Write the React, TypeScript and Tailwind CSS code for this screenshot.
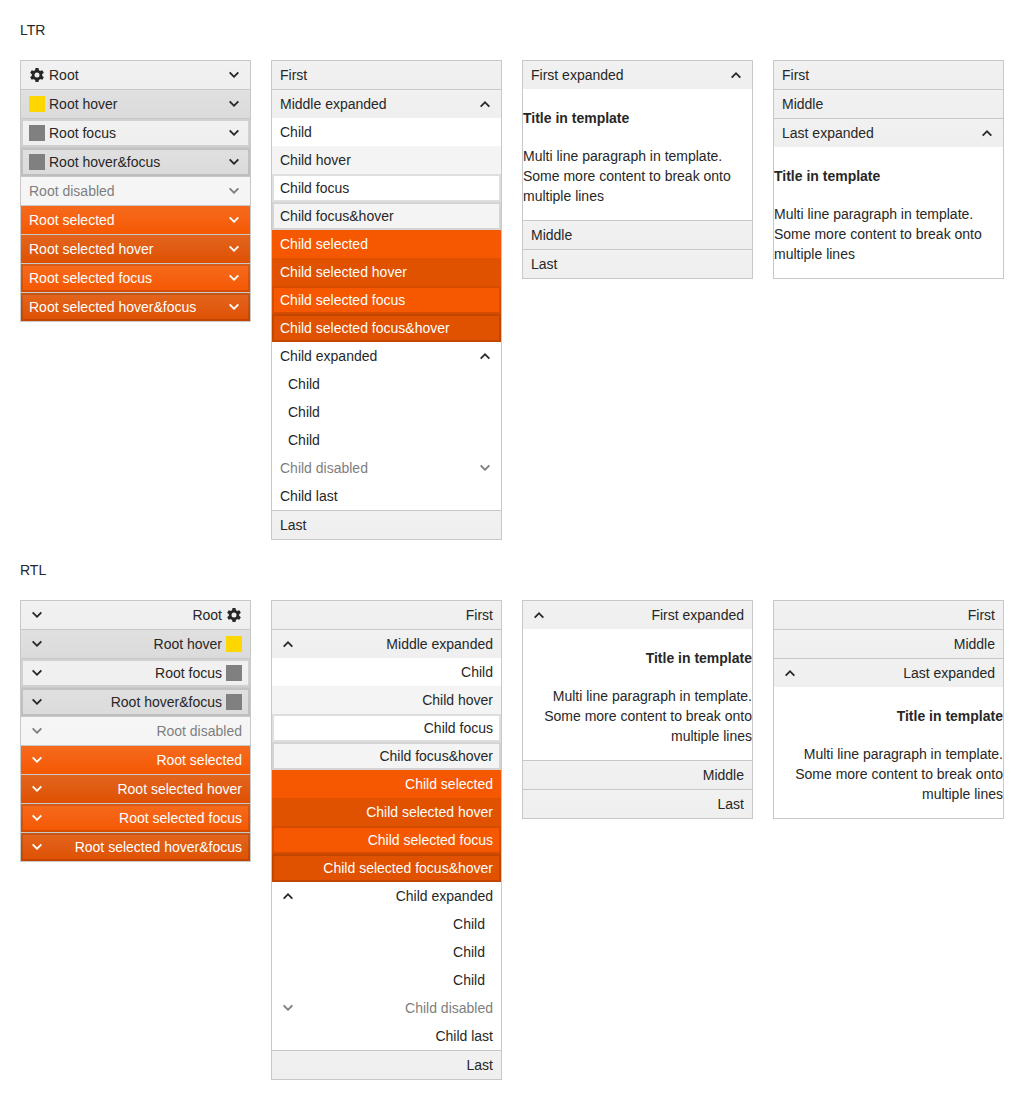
import type { ReactNode } from "react";

type Row = {
  label: string;
  look: string;
  icon?: "gear" | "gold" | "gray";
  arrow?: "up" | "down";
  indent?: boolean;
};

const line = "border-t border-[#c8c8c8]";
const root = "bg-linear-to-b from-[#f1f1f1] to-[#efefef]";
const ring = "shadow-[inset_0_0_0_2px_rgba(0,0,0,0.13)]";

const rootRows: Row[] = [
  { label: "Root", look: root, icon: "gear", arrow: "down" },
  { label: "Root hover", look: "bg-linear-to-b from-[#e0e0e0] to-[#dbdbdb]", icon: "gold", arrow: "down" },
  { label: "Root focus", look: `${root} ${ring}`, icon: "gray", arrow: "down" },
  { label: "Root hover&focus", look: `bg-linear-to-b from-[#e0e0e0] to-[#dbdbdb] ${ring}`, icon: "gray", arrow: "down" },
  { label: "Root disabled", look: `${root} opacity-60`, arrow: "down" },
  { label: "Root selected", look: "bg-linear-to-b from-[#f66a1c] to-[#f55800] text-white", arrow: "down" },
  { label: "Root selected hover", look: "bg-linear-to-b from-[#e2651d] to-[#df5000] text-white", arrow: "down" },
  { label: "Root selected focus", look: `bg-linear-to-b from-[#f66a1c] to-[#f55800] text-white ${ring}`, arrow: "down" },
  { label: "Root selected hover&focus", look: `bg-linear-to-b from-[#e2651d] to-[#df5000] text-white ${ring}`, arrow: "down" },
];

const childRows: Row[] = [
  { label: "Child", look: "" },
  { label: "Child hover", look: "bg-[#f4f4f4]" },
  { label: "Child focus", look: ring },
  { label: "Child focus&hover", look: `bg-[#f4f4f4] ${ring}` },
  { label: "Child selected", look: "bg-[#f55800] text-white" },
  { label: "Child selected hover", look: "bg-[#e05100] text-white" },
  { label: "Child selected focus", look: `bg-[#f55800] text-white ${ring}` },
  { label: "Child selected focus&hover", look: `bg-[#e05100] text-white ${ring}` },
  { label: "Child expanded", look: "", arrow: "up" },
  { label: "Child", look: "", indent: true },
  { label: "Child", look: "", indent: true },
  { label: "Child", look: "", indent: true },
  { label: "Child disabled", look: "opacity-60", arrow: "down" },
  { label: "Child last", look: "" },
];

const teeth = [0, 60, 120, 180, 240, 300];

function Gear() {
  return (
    <svg viewBox="0 0 16 16" className="size-4" fill="currentColor">
      <circle cx="8" cy="8" r="3.85" fill="none" stroke="currentColor" strokeWidth="2.7" />
      {teeth.map((angle) => (
        <path key={angle} d="M6.5 1h3l.6 3.2H5.9z" transform={`rotate(${angle} 8 8)`} />
      ))}
    </svg>
  );
}

function Chevron({ up }: { up?: boolean }) {
  return (
    <svg viewBox="0 0 16 16" className="size-4 shrink-0" fill="currentColor">
      <path d={up ? "M8 5 13 10 11.7 11.3 8 7.6 4.3 11.3 3 10z" : "M8 11 3 6 4.3 4.7 8 8.4 11.7 4.7 13 6z"} />
    </svg>
  );
}

function Item({ row }: { row: Row }) {
  return (
    <div className={`flex h-7 items-center justify-between px-2 ${row.look}`}>
      <span className={`flex items-center gap-1 whitespace-nowrap ${row.indent ? "ps-2" : ""}`}>
        {row.icon === "gear" && <Gear />}
        {row.icon === "gold" && <span className="size-4 bg-[#ffd700]" />}
        {row.icon === "gray" && <span className="size-4 bg-[#808080]" />}
        <span>{row.label}</span>
      </span>
      {row.arrow && <Chevron up={row.arrow === "up"} />}
    </div>
  );
}

function Header({ label, first, open }: { label: string; first?: boolean; open?: boolean }) {
  return (
    <div className={first ? "" : line}>
      <Item row={{ label, look: root, arrow: open ? "up" : undefined }} />
    </div>
  );
}

function Panel({ dir, children }: { dir: "ltr" | "rtl"; children: ReactNode }) {
  return (
    <div dir={dir} className="self-start border border-[#c8c8c8] bg-white">
      {children}
    </div>
  );
}

function Template() {
  return (
    <div className="pt-[19px] pb-[14px]">
      <h4 className="mb-[18px] font-bold">Title in template</h4>
      <p dir="ltr" className="in-[[dir=rtl]]:text-right">
        Multi line paragraph in template. Some more content to break onto multiple lines
      </p>
    </div>
  );
}

function Section({ title, dir }: { title: string; dir: "ltr" | "rtl" }) {
  return (
    <section>
      <h2 className="mb-5">{title}</h2>
      <div className="grid grid-cols-[repeat(4,231px)] gap-5">
        <Panel dir={dir}>
          {rootRows.map((row, i) => (
            <div key={row.label} className={i ? line : ""}>
              <Item row={row} />
            </div>
          ))}
        </Panel>
        <Panel dir={dir}>
          <Header label="First" first />
          <Header label="Middle expanded" open />
          {childRows.map((row, i) => (
            <Item key={i} row={row} />
          ))}
          <Header label="Last" />
        </Panel>
        <Panel dir={dir}>
          <Header label="First expanded" first open />
          <Template />
          <Header label="Middle" />
          <Header label="Last" />
        </Panel>
        <Panel dir={dir}>
          <Header label="First" first />
          <Header label="Middle" />
          <Header label="Last expanded" open />
          <Template />
        </Panel>
      </div>
    </section>
  );
}

export default function App() {
  return (
    <main className="flex h-[1100px] w-[1024px] flex-col gap-5 bg-white p-5 font-['Liberation_Sans',Arial,sans-serif] text-sm leading-5 text-[#272727]">
      <Section title="LTR" dir="ltr" />
      <Section title="RTL" dir="rtl" />
    </main>
  );
}
